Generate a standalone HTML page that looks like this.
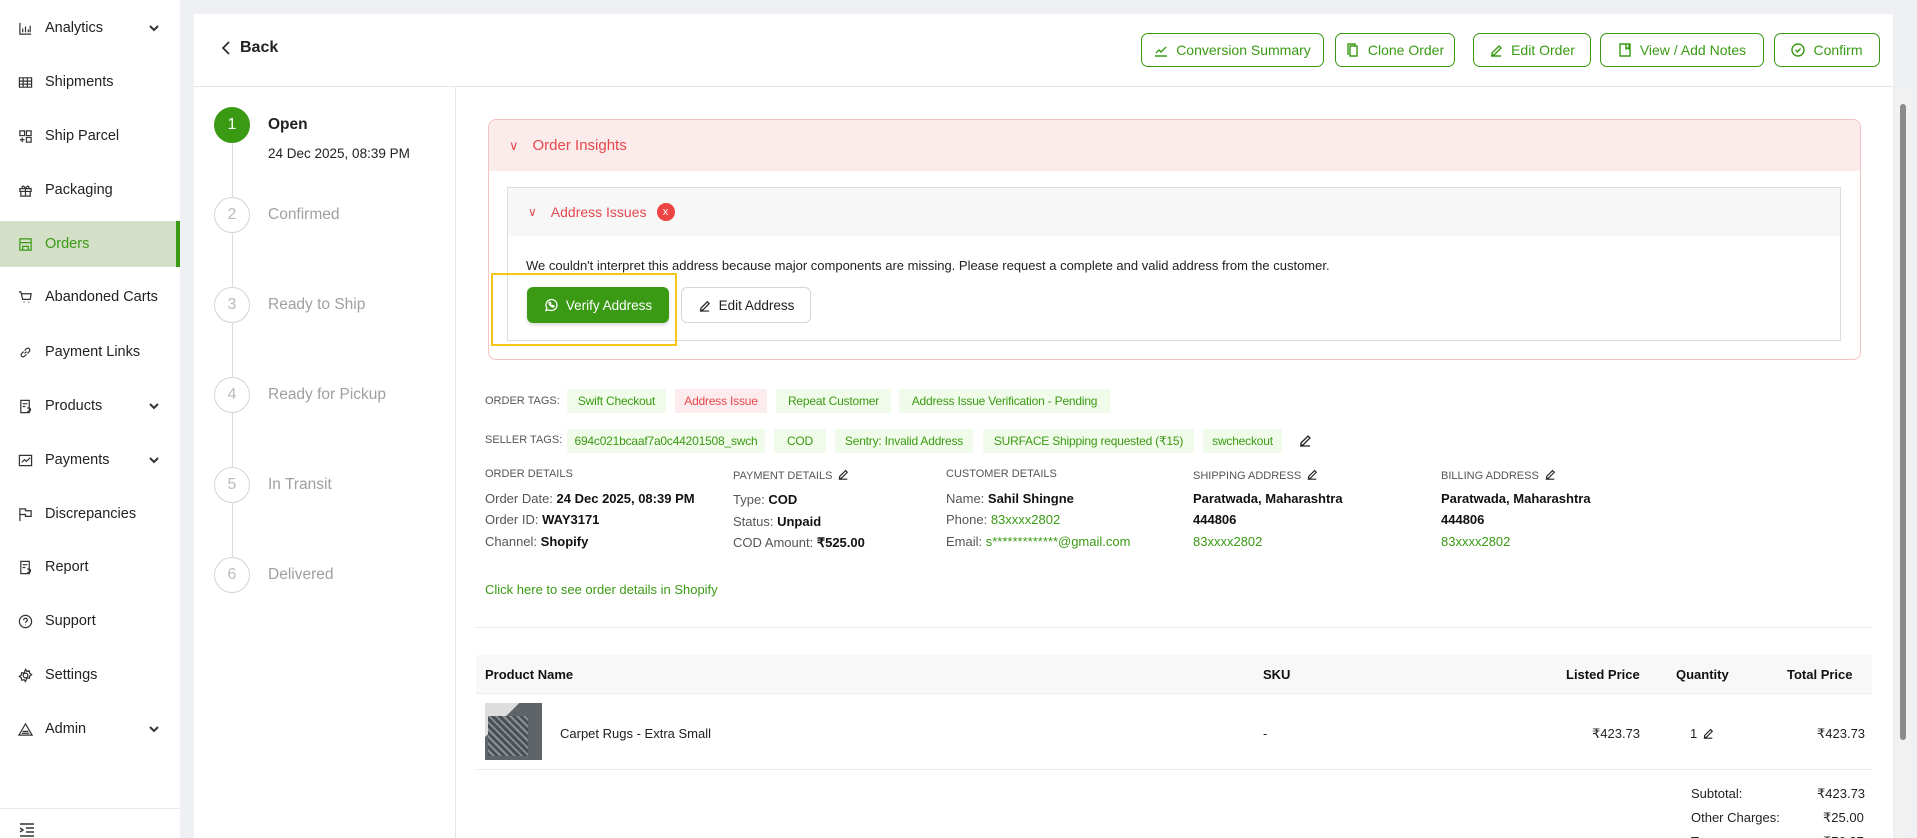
<!DOCTYPE html>
<html><head><meta charset="utf-8"><style>
*{box-sizing:border-box;margin:0;padding:0}
html,body{width:1917px;height:838px;overflow:hidden}
body{background:#eef0f4;font-family:"Liberation Sans",sans-serif;color:#222;position:relative}
.abs{position:absolute}
.side{left:0;top:0;width:180px;height:838px;background:#fff}
.si{position:absolute;left:0;width:180px;height:46px;display:flex;align-items:center;font-size:14.5px;color:#222}
.si svg{position:absolute;left:18px;width:15px;height:15px;fill:none;stroke:#333;stroke-width:1.3}
.si span{position:absolute;left:45px}
.si .chev{left:148px;width:12px;height:12px;stroke-width:2}
.si.act{background:#d3dfc6;color:#3a9a14;border-right:4px solid #3a9a14}
.si.act svg{stroke:#3a9a14}
.card{left:194px;top:14px;width:1699px;height:824px;background:#fff}
.btn{position:absolute;top:33px;height:34px;border:1.5px solid #3a9a14;border-radius:7px;color:#3a9a14;font-size:14px;display:flex;align-items:center;justify-content:center;gap:8px}
.btn svg{width:14px;height:14px;fill:none;stroke:#3a9a14;stroke-width:1.4}
.circ{position:absolute;left:214px;width:36px;height:36px;border-radius:50%;border:1.5px solid #d4d4d4;color:#bbb;font-size:16px;display:flex;align-items:center;justify-content:center}
.st{position:absolute;left:268px;font-size:15.5px;color:#a0a0a0}
.vl{position:absolute;left:232px;width:1px;background:#ddd}
.tag{position:absolute;height:24px;background:#f1fbe9;color:#3a9a14;font-size:12px;display:flex;align-items:center;justify-content:center;white-space:nowrap;letter-spacing:-0.2px}
.lbl{position:absolute;font-size:11px;color:#555;text-transform:uppercase;white-space:nowrap}
.t{position:absolute;font-size:13px;color:#555;white-space:nowrap}
.t b{color:#111;font-weight:bold}
.g{color:#3a9a14}
.pen{display:inline-block;width:12px;height:12px;vertical-align:-1px;margin-left:5px}
</style></head><body>
<div class="abs side">
 <div class="si" style="top:5px"><svg viewBox="0 0 16 16"><path d="M2 2v12h12M5 12V8M8 12V6M11 12V9M13 12V5"/></svg><span>Analytics</span><svg class="chev" viewBox="0 0 12 12"><path d="M2 4l4 4 4-4"/></svg></div>
 <div class="si" style="top:59px"><svg viewBox="0 0 16 16"><path d="M1.5 3h13v10h-13zM1.5 6.5h13M1.5 9.8h13M5.5 3v10M10 3v10"/></svg><span>Shipments</span></div>
 <div class="si" style="top:113px"><svg viewBox="0 0 16 16"><path d="M2 2h5v5H2zM9 2h5v5H9zM9 9h5v5H9zM4.5 9v5M2 11.5h5"/></svg><span>Ship Parcel</span></div>
 <div class="si" style="top:167px"><svg viewBox="0 0 16 16"><path d="M2 6h12v3H2zM3 9h10v5H3zM8 6v8M8 6C6 2 3 3 5 6M8 6c2-4 5-3 3 0"/></svg><span>Packaging</span></div>
 <div class="si act" style="top:221px"><svg viewBox="0 0 16 16"><path d="M2 2h12v12H2zM2 6h12M5 10h6v4H5z"/></svg><span>Orders</span></div>
 <div class="si" style="top:274px"><svg viewBox="0 0 16 16"><path d="M1 2h2l2 8h8l1-6H4M6 13h1M11 13h1"/></svg><span>Abandoned Carts</span></div>
 <div class="si" style="top:329px"><svg viewBox="0 0 16 16"><path d="M7 9l2-2M6 7L4 9a2 2 0 003 3l2-2M10 9l2-2a2 2 0 00-3-3L7 6"/></svg><span>Payment Links</span></div>
 <div class="si" style="top:383px"><svg viewBox="0 0 16 16"><path d="M3 1.5h9v13H3zM5 5h5M5 8h3M10 10a2 2 0 110 3"/></svg><span>Products</span><svg class="chev" viewBox="0 0 12 12"><path d="M2 4l4 4 4-4"/></svg></div>
 <div class="si" style="top:437px"><svg viewBox="0 0 16 16"><path d="M1.5 2.5h13v11h-13zM4 10l3-3 2 2 4-4"/></svg><span>Payments</span><svg class="chev" viewBox="0 0 12 12"><path d="M2 4l4 4 4-4"/></svg></div>
 <div class="si" style="top:491px"><svg viewBox="0 0 16 16"><path d="M2 15V2h6v2h6v6H8V8H2"/></svg><span>Discrepancies</span></div>
 <div class="si" style="top:544px"><svg viewBox="0 0 16 16"><path d="M3 1.5h9v13H3zM5 5h5M5 8h3M10 10a2 2 0 110 3"/></svg><span>Report</span></div>
 <div class="si" style="top:598px"><svg viewBox="0 0 16 16"><circle cx="8" cy="8" r="6.5"/><path d="M6 6.5a2 2 0 114 0c0 1.5-2 1.5-2 3M8 11.5v.5"/></svg><span>Support</span></div>
 <div class="si" style="top:652px"><svg viewBox="0 0 16 16"><circle cx="8" cy="8" r="2.5"/><path d="M8 1.5l1.5 2 2.5-.5.5 2.5 2 1.5-2 1.5-.5 2.5-2.5-.5L8 14.5l-1.5-2-2.5.5-.5-2.5-2-1.5 2-1.5.5-2.5 2.5.5z"/></svg><span>Settings</span></div>
 <div class="si" style="top:706px"><svg viewBox="0 0 16 16"><path d="M8 2L1 14h14zM5 10h6M4 12h8"/></svg><span>Admin</span><svg class="chev" viewBox="0 0 12 12"><path d="M2 4l4 4 4-4"/></svg></div>
 <div class="abs" style="left:0;top:808px;width:180px;height:1px;background:#e8e8e8"></div>
 <svg class="abs" style="left:19px;top:822px;width:16px;height:16px" viewBox="0 0 16 16" fill="none" stroke="#333" stroke-width="1.4"><path d="M1 2h14M7 6h8M7 10h8M1 14h14M1 6l3 2-3 2"/></svg>
</div>

<div class="abs card"></div>
<div class="abs" style="left:194px;top:86px;width:1699px;height:1px;background:#e6e6e6"></div>
<div class="abs" style="left:455px;top:87px;width:1px;height:751px;background:#e6e6e6"></div>
<svg class="abs" style="left:221px;top:41px;width:10px;height:14px" viewBox="0 0 10 14" fill="none" stroke="#222" stroke-width="1.6"><path d="M8 1L2 7l6 6"/></svg>
<div class="abs" style="left:240px;top:39px;font-size:16px;color:#222;font-weight:bold">Back</div>

<div class="btn" style="left:1141px;width:183px"><svg viewBox="0 0 14 14"><path d="M1 13h12M2 10l3-3 2 2 5-5"/></svg>Conversion Summary</div>
<div class="btn" style="left:1335px;width:120px"><svg viewBox="0 0 14 14"><path d="M4 3h7v10H4zM3 11H2V1h7v2"/></svg>Clone Order</div>
<div class="btn" style="left:1473px;width:118px"><svg viewBox="0 0 14 14"><path d="M2 13h10M3 10l7-7 2 2-7 7H3z"/></svg>Edit Order</div>
<div class="btn" style="left:1600px;width:164px"><svg viewBox="0 0 14 14"><path d="M2 1h10v12H2zM8 1v5l1.5-1L11 6V1"/></svg>View / Add Notes</div>
<div class="btn" style="left:1774px;width:106px"><svg viewBox="0 0 14 14"><circle cx="7" cy="7" r="6"/><path d="M4.5 7l2 2 3-3.5"/></svg>Confirm</div>

<div class="vl" style="top:143px;height:54px"></div>
<div class="vl" style="top:233px;height:54px"></div>
<div class="vl" style="top:323px;height:54px"></div>
<div class="vl" style="top:413px;height:54px"></div>
<div class="vl" style="top:503px;height:54px"></div>
<div class="circ" style="top:107px;background:#3a9a14;border-color:#3a9a14;color:#fff">1</div>
<div class="st" style="top:116px;color:#222;font-weight:bold">Open</div>
<div class="abs" style="left:268px;top:146px;font-size:13.5px;color:#222">24 Dec 2025, 08:39 PM</div>
<div class="circ" style="top:197px">2</div><div class="st" style="top:206px">Confirmed</div>
<div class="circ" style="top:287px">3</div><div class="st" style="top:296px">Ready to Ship</div>
<div class="circ" style="top:377px">4</div><div class="st" style="top:386px">Ready for Pickup</div>
<div class="circ" style="top:467px">5</div><div class="st" style="top:476px">In Transit</div>
<div class="circ" style="top:557px">6</div><div class="st" style="top:566px">Delivered</div>

<div class="abs" style="left:1896px;top:88px;width:14px;height:750px;background:#f1f1f1"></div>
<div class="abs" style="left:1900px;top:104px;width:6px;height:636px;background:#8b8b8b;border-radius:3px"></div>

<div class="abs" style="left:488px;top:119px;width:1373px;height:241px;border:1px solid #f5c2c4;border-radius:8px;overflow:hidden">
 <div style="height:51px;background:#fcebeb;display:flex;align-items:center;padding-left:20px;color:#e5484d;font-size:15px"><span style="font-size:13px;margin-right:14px">&#8744;</span>Order Insights</div>
</div>
<div class="abs" style="left:507px;top:187px;width:1334px;height:154px;border:1px solid #dcdcdc;background:#fff">
 <div style="height:48px;background:#f7f7f7;display:flex;align-items:center;padding-left:20px;color:#e5484d;font-size:14px"><span style="font-size:12px;margin-right:14px">&#8744;</span>Address Issues<span style="display:inline-flex;width:18px;height:18px;border-radius:50%;background:#ef4444;color:#fff;font-size:11px;align-items:center;justify-content:center;margin-left:10px">x</span></div>
</div>
<div class="abs" style="left:526px;top:258px;font-size:13px;color:#222">We couldn't interpret this address because major components are missing. Please request a complete and valid address from the customer.</div>
<div class="abs" style="left:527px;top:287px;width:142px;height:36px;background:#3a9a14;border-radius:6px;color:#fff;font-size:13.5px;display:flex;align-items:center;justify-content:center;gap:8px;box-shadow:0 2px 3px rgba(0,0,0,.15)"><svg width="14" height="14" viewBox="0 0 14 14" fill="none" stroke="#fff" stroke-width="1.3"><path d="M2 12.5l.8-2.6A5.5 5.5 0 117 12.5a5.5 5.5 0 01-2.6-.7z"/><path d="M5 4.5c0 2.5 2 4.5 4.5 4.5l.5-1-1.3-.6-.6.6c-.8-.4-1.4-1-1.8-1.8l.6-.6L6.3 4.3z"/></svg>Verify Address</div>
<div class="abs" style="left:681px;top:287px;width:130px;height:36px;border:1px solid #d6d6d6;border-radius:6px;font-size:13.5px;color:#222;display:flex;align-items:center;justify-content:center;gap:8px"><svg width="13" height="13" viewBox="0 0 14 14" fill="none" stroke="#222" stroke-width="1.3"><path d="M2 13h10M3 10l7-7 2 2-7 7H3z"/></svg>Edit Address</div>
<div class="abs" style="left:491px;top:273px;width:186px;height:73px;border:2px solid #f5c518"></div>

<div class="lbl" style="left:485px;top:395px">Order Tags:</div>
<div class="tag" style="left:567px;top:389px;width:99px">Swift Checkout</div>
<div class="tag" style="left:675px;top:389px;width:92px;background:#fdeced;color:#e5484d">Address Issue</div>
<div class="tag" style="left:776px;top:389px;width:115px">Repeat Customer</div>
<div class="tag" style="left:899px;top:389px;width:211px">Address Issue Verification - Pending</div>
<div class="lbl" style="left:485px;top:434px">Seller Tags:</div>
<div class="tag" style="left:567px;top:429px;width:198px">694c021bcaaf7a0c44201508_swch</div>
<div class="tag" style="left:774px;top:429px;width:52px">COD</div>
<div class="tag" style="left:835px;top:429px;width:138px">Sentry: Invalid Address</div>
<div class="tag" style="left:983px;top:429px;width:211px">SURFACE Shipping requested (₹15)</div>
<div class="tag" style="left:1203px;top:429px;width:79px">swcheckout</div>
<svg class="abs" style="left:1298px;top:433px;width:14px;height:14px" viewBox="0 0 14 14" fill="none" stroke="#222" stroke-width="1.3"><path d="M2 13h10M3 10l7-7 2 2-7 7H3z"/></svg>

<div class="lbl" style="left:485px;top:468px">Order Details</div>
<div class="lbl" style="left:733px;top:468px">Payment Details<svg class="pen" viewBox="0 0 14 14" fill="none" stroke="#222" stroke-width="1.3"><path d="M2 13h10M3 10l7-7 2 2-7 7H3z"/></svg></div>
<div class="lbl" style="left:946px;top:468px">Customer Details</div>
<div class="lbl" style="left:1193px;top:468px">Shipping Address<svg class="pen" viewBox="0 0 14 14" fill="none" stroke="#222" stroke-width="1.3"><path d="M2 13h10M3 10l7-7 2 2-7 7H3z"/></svg></div>
<div class="lbl" style="left:1441px;top:468px">Billing Address<svg class="pen" viewBox="0 0 14 14" fill="none" stroke="#222" stroke-width="1.3"><path d="M2 13h10M3 10l7-7 2 2-7 7H3z"/></svg></div>
<div class="t" style="left:485px;top:491px">Order Date: <b>24 Dec 2025, 08:39 PM</b></div>
<div class="t" style="left:485px;top:512px">Order ID: <b>WAY3171</b></div>
<div class="t" style="left:485px;top:534px">Channel: <b>Shopify</b></div>
<div class="t" style="left:733px;top:492px">Type: <b>COD</b></div>
<div class="t" style="left:733px;top:514px">Status: <b>Unpaid</b></div>
<div class="t" style="left:733px;top:535px">COD Amount: <b>₹525.00</b></div>
<div class="t" style="left:946px;top:491px">Name: <b>Sahil Shingne</b></div>
<div class="t" style="left:946px;top:512px">Phone: <span class="g">83xxxx2802</span></div>
<div class="t" style="left:946px;top:534px">Email: <span class="g">s*************@gmail.com</span></div>
<div class="t" style="left:1193px;top:491px"><b>Paratwada, Maharashtra</b></div>
<div class="t" style="left:1193px;top:512px"><b>444806</b></div>
<div class="t g" style="left:1193px;top:534px">83xxxx2802</div>
<div class="t" style="left:1441px;top:491px"><b>Paratwada, Maharashtra</b></div>
<div class="t" style="left:1441px;top:512px"><b>444806</b></div>
<div class="t g" style="left:1441px;top:534px">83xxxx2802</div>
<div class="t g" style="left:485px;top:582px">Click here to see order details in Shopify</div>

<div class="abs" style="left:476px;top:627px;width:1396px;height:1px;background:#ececec"></div>
<div class="abs" style="left:476px;top:655px;width:1396px;height:39px;background:#f8f8f8;border-bottom:1px solid #ececec"></div>
<div class="t" style="left:485px;top:667px"><b>Product Name</b></div>
<div class="t" style="left:1263px;top:667px"><b>SKU</b></div>
<div class="t" style="left:1566px;top:667px"><b>Listed Price</b></div>
<div class="t" style="left:1676px;top:667px"><b>Quantity</b></div>
<div class="t" style="left:1787px;top:667px"><b>Total Price</b></div>
<div class="abs" style="left:485px;top:703px;width:57px;height:57px;background:linear-gradient(135deg,#ddd 0 30%,#5e6468 30% 100%)"></div>
<div class="abs" style="left:488px;top:716px;width:40px;height:40px;background:repeating-linear-gradient(45deg,#4a5054 0 3px,#8a9094 3px 5px)"></div>
<div class="t" style="left:560px;top:726px;color:#222">Carpet Rugs - Extra Small</div>
<div class="t" style="left:1263px;top:726px;color:#222">-</div>
<div class="t" style="left:1592px;top:726px;color:#222">₹423.73</div>
<div class="t" style="left:1690px;top:726px;color:#222">1<svg class="pen" viewBox="0 0 14 14" fill="none" stroke="#222" stroke-width="1.3"><path d="M2 13h10M3 10l7-7 2 2-7 7H3z"/></svg></div>
<div class="t" style="left:1817px;top:726px;color:#222">₹423.73</div>
<div class="abs" style="left:476px;top:769px;width:1396px;height:1px;background:#ececec"></div>
<div class="t" style="left:1691px;top:786px;color:#222">Subtotal:</div>
<div class="t" style="left:1817px;top:786px;color:#222">₹423.73</div>
<div class="t" style="left:1691px;top:810px;color:#222">Other Charges:</div>
<div class="t" style="left:1823px;top:810px;color:#222">₹25.00</div>
<div class="t" style="left:1691px;top:834px;color:#222">Tax:</div>
<div class="t" style="left:1823px;top:834px;color:#222">₹76.27</div>
</body></html>
